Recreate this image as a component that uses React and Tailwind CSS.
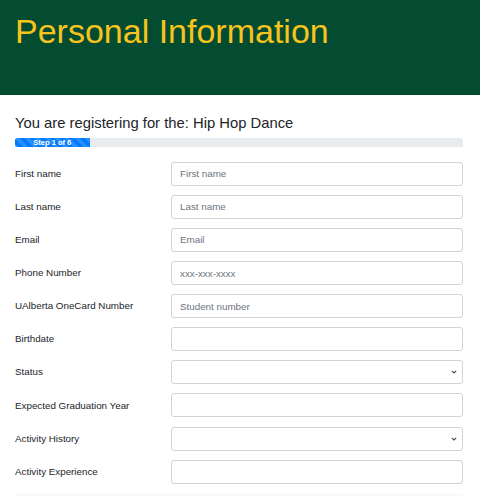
const fields = [
  { label: 'First name', placeholder: 'First name' },
  { label: 'Last name', placeholder: 'Last name' },
  { label: 'Email', placeholder: 'Email' },
  { label: 'Phone Number', placeholder: 'xxx-xxx-xxxx' },
  { label: 'UAlberta OneCard Number', placeholder: 'Student number' },
  { label: 'Birthdate', placeholder: '' },
  { label: 'Status', select: true },
  { label: 'Expected Graduation Year', placeholder: '' },
  { label: 'Activity History', select: true },
  { label: 'Activity Experience', placeholder: '' },
]

const Chevron = () => (
  <svg width="6" height="4" viewBox="0 0 6 4" className="pointer-events-none absolute right-[6px] top-1/2 -translate-y-1/2">
    <path d="M0.8 0.8 L3 3 L5.2 0.8" fill="none" stroke="#4a4f55" strokeWidth="1.2" />
  </svg>
)

const App = () => {
  return (
    <div className="min-h-[496px] bg-white font-['Liberation_Sans',Arial,sans-serif] text-[#212529]">
      <header className="h-[95px] bg-[#034c31] px-[15px] pt-[14px]">
        <h1 className="text-[34px] leading-none text-[#f7c31c]">Personal Information</h1>
      </header>

      <main className="pl-[15px] pr-[17px] pt-[20px]">
        <h4 className="text-[14.8px] leading-[1.2]">You are registering for the: Hip Hop Dance</h4>

        <div className="mt-[5px] flex h-[9px] overflow-hidden rounded-[2.6px] bg-[#e9ecef]">
          <div className="flex w-1/6 items-center justify-center bg-[#007bff] bg-[linear-gradient(45deg,rgba(255,255,255,.15)_25%,transparent_25%,transparent_50%,rgba(255,255,255,.15)_50%,rgba(255,255,255,.15)_75%,transparent_75%,transparent)] bg-[length:10px_10px] text-[7.5px] font-bold leading-none text-white">
            Step 1 of 6
          </div>
        </div>

        <form className="mt-[15px] flex flex-col gap-[9.1px]">
          {fields.map((f) => (
            <div key={f.label} className="flex h-[24px] items-center">
              <label className="w-[156px] shrink-0 text-[9.8px] leading-none">{f.label}</label>
              <div className="relative h-[24px] flex-1">
                {f.select ? (
                  <>
                    <select className="block h-[24px] w-full appearance-none rounded-[3px] border border-[#ced4da] bg-white px-[8px] text-[9.8px] outline-none">
                      <option></option>
                    </select>
                    <Chevron />
                  </>
                ) : (
                  <input
                    type="text"
                    placeholder={f.placeholder}
                    className="block h-[24px] w-full rounded-[3px] border border-[#ced4da] bg-white px-[8px] text-[9.8px] outline-none placeholder:text-[#6c757d]"
                  />
                )}
              </div>
            </div>
          ))}
        </form>

        <div className="mt-[10px] h-[20px] bg-[#f8f9fa]"></div>
      </main>
    </div>
  )
}

export default App
